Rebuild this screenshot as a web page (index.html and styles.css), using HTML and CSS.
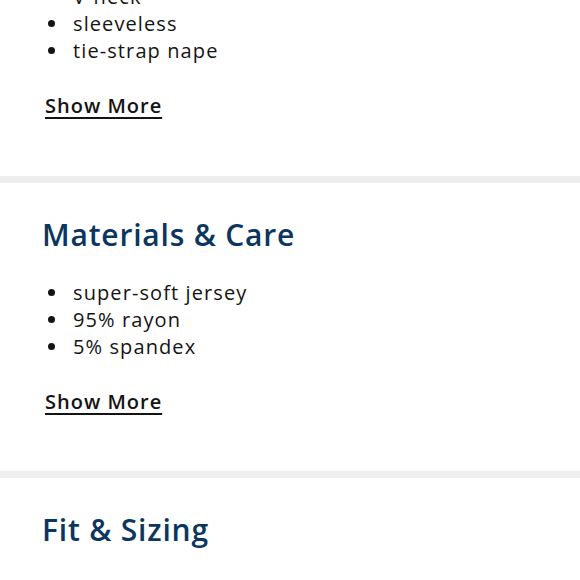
FILE: index.html
```html
<!DOCTYPE html>
<html>
<head>
<meta charset="utf-8">
<link rel="stylesheet" href="styles.css">
</head>
<body>
<div class="page">
  <section class="block first">
    <ul class="bullets">
      <li>V-neck</li>
      <li>sleeveless</li>
      <li>tie-strap nape</li>
    </ul>
    <a class="more" href="#">Show More</a>
  </section>
  <section class="block">
    <h2 class="title">Materials &amp; Care</h2>
    <ul class="bullets">
      <li>super-soft jersey</li>
      <li>95% rayon</li>
      <li>5% spandex</li>
    </ul>
    <a class="more" href="#">Show More</a>
  </section>
  <section class="block last">
    <h2 class="title">Fit &amp; Sizing</h2>
  </section>
</div>
</body>
</html>
```
FILE: styles.css
```css
html, body {
  margin: 0;
  padding: 0;
  background: #ffffff;
}
body {
  font-family: "Open Sans", "Liberation Sans", sans-serif;
  color: #141414;
  overflow: hidden;
}
.page {
  margin-top: -17px;
}
.block {
  display: flex;
  flex-direction: column;
  align-items: flex-start;
  padding: 35px 0 56px 0;
  border-bottom: 7px solid #eeeeee;
}
.block.first {
  padding-top: 0;
  padding-bottom: 57px;
}
.block.last {
  border-bottom: none;
}
.title {
  margin: 0 0 27px 42px;
  font-size: 30px;
  line-height: 34px;
  font-weight: 600;
  color: #0c365f;
  letter-spacing: 0.8px;
}
.bullets {
  list-style: none;
  margin: 0 0 28px 0;
  padding: 0 0 0 48px;
  font-size: 20px;
  line-height: 27px;
  letter-spacing: 1.1px;
}
.bullets li {
  display: flex;
  align-items: center;
}
.bullets li::before {
  content: "";
  width: 7px;
  height: 7px;
  border-radius: 50%;
  background: #141414;
  margin-right: 18px;
  flex: none;
}
.more {
  margin-left: 45px;
  font-size: 20px;
  line-height: 27px;
  font-weight: 600;
  color: #141414;
  letter-spacing: 1px;
  text-decoration: underline;
  text-decoration-thickness: 2px;
  text-underline-offset: 4px;
}
```
